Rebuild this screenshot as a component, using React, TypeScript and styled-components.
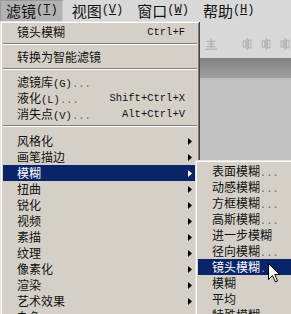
import React from 'react'
import styled, { createGlobalStyle } from 'styled-components'

type Item =
  | { kind: 'sep'; size?: number }
  | { kind: 'item'; label: string; key?: string; more?: string; shortcut?: string; sub?: boolean; active?: boolean }

const MAIN: Item[] = [
  { kind: 'item', label: '镜头模糊', shortcut: 'Ctrl+F' },
  { kind: 'sep' },
  { kind: 'item', label: '转换为智能滤镜' },
  { kind: 'sep' },
  { kind: 'item', label: '滤镜库', key: '(G)', more: '...' },
  { kind: 'item', label: '液化', key: '(L)', more: '...', shortcut: 'Shift+Ctrl+X' },
  { kind: 'item', label: '消失点', key: '(V)', more: '...', shortcut: 'Alt+Ctrl+V' },
  { kind: 'sep', size: 11 },
  { kind: 'item', label: '风格化', sub: true },
  { kind: 'item', label: '画笔描边', sub: true },
  { kind: 'item', label: '模糊', sub: true, active: true },
  { kind: 'item', label: '扭曲', sub: true },
  { kind: 'item', label: '锐化', sub: true },
  { kind: 'item', label: '视频', sub: true },
  { kind: 'item', label: '素描', sub: true },
  { kind: 'item', label: '纹理', sub: true },
  { kind: 'item', label: '像素化', sub: true },
  { kind: 'item', label: '渲染', sub: true },
  { kind: 'item', label: '艺术效果', sub: true },
  { kind: 'item', label: '杂色', sub: true },
]

const BLUR: Item[] = [
  { kind: 'item', label: '表面模糊', more: '...' },
  { kind: 'item', label: '动感模糊', more: '...' },
  { kind: 'item', label: '方框模糊', more: '...' },
  { kind: 'item', label: '高斯模糊', more: '...' },
  { kind: 'item', label: '进一步模糊' },
  { kind: 'item', label: '径向模糊', more: '...' },
  { kind: 'item', label: '镜头模糊', more: '...', active: true },
  { kind: 'item', label: '模糊' },
  { kind: 'item', label: '平均' },
  { kind: 'item', label: '特殊模糊', more: '...' },
]

const TOP = [
  { label: '滤镜', key: 'T', open: true },
  { label: '视图', key: 'V' },
  { label: '窗口', key: 'W' },
  { label: '帮助', key: 'H' },
]


function Arrow({ light }: { light?: boolean }) {
  return (
    <S.ArrowIcon width="4" height="7" viewBox="0 0 4 7">
      <path d="M0 0 L4 3.5 L0 7 Z" fill={light ? '#fff' : '#000'} />
    </S.ArrowIcon>
  )
}

function MenuList({ items }: { items: Item[] }) {
  return (
    <>
      {items.map((it, i) =>
        it.kind === 'sep' ? (
          <S.Separator key={i} $size={it.size ?? 9} />
        ) : (
          <S.Row key={i} $active={!!it.active}>
            <S.Label>
              {it.label}
              {it.key && <S.Mono>{it.key}</S.Mono>}
              {it.more && <S.Dots>{it.more}</S.Dots>}
            </S.Label>
            {it.shortcut && <S.Shortcut>{it.shortcut}</S.Shortcut>}
            {it.sub && <Arrow light={it.active} />}
          </S.Row>
        )
      )}
    </>
  )
}

function ToolIcon({ variant }: { variant: number }) {
  if (variant === 0) {
    return (
      <svg width="14" height="14" viewBox="0 0 14 14">
        <path d="M7 1 V12 M2 4 H12 M3 7 H11 M2 10 H12 M0 13 H14" stroke="#a3a3a3" strokeWidth="1" fill="none" />
      </svg>
    )
  }
  return (
    <svg width="14" height="14" viewBox="0 0 14 14">
      <path d="M7 0 V14" stroke="#9c9c9c" strokeWidth="1" />
      <rect x="2.5" y="3.5" width="3" height="7" fill="none" stroke="#a8a8a8" />
      <rect x="8.5" y="2.5" width="3" height="9" fill="none" stroke="#a8a8a8" />
    </svg>
  )
}


export default function App() {
  return (
    <S.Screen>
      <GlobalStyle />
      <S.MenuBar>
        {TOP.map(t => (
          <S.TopItem key={t.label} $open={!!t.open}>
            {t.label}
            <S.TopKey>(<u>{t.key}</u>)</S.TopKey>
          </S.TopItem>
        ))}
      </S.MenuBar>

      <S.Toolbar>
        <ToolIcon variant={0} />
        <S.ToolGap />
        <ToolIcon variant={1} />
        <ToolIcon variant={1} />
        <ToolIcon variant={1} />
      </S.Toolbar>
      <S.Band />
      <S.Canvas />

      <S.Menu $top={21} $left={0} $width={200}>
        <MenuList items={MAIN} />
      </S.Menu>

      <S.Menu $top={160} $left={195} $width={100}>
        <MenuList items={BLUR} />
      </S.Menu>

      <S.Cursor width="13" height="20" viewBox="0 0 13 20">
        <path
          d="M0.5 0.5 L0.5 16.5 L4.5 12.5 L7.5 19 L9.5 18 L6.8 11.5 L11.5 11.5 Z"
          fill="#fff"
          stroke="#000"
          strokeWidth="1"
          strokeLinejoin="miter"
        />
      </S.Cursor>
    </S.Screen>
  )
}


const GlobalStyle = createGlobalStyle`
  html, body {
    margin: 0;
    padding: 0;
    background: #bfbfbf;
  }
  body {
    font-family: "Noto Sans CJK SC", sans-serif;
  }
`

const S = {
  Screen: styled.div`
    position: relative;
    width: 291px;
    height: 314px;
    overflow: hidden;
    display: flex;
    flex-direction: column;
    background: #bfbfbf;
  `,

  MenuBar: styled.div`
    height: 21px;
    display: flex;
    gap: 3px;
    background: #d8d8d8;
    flex-shrink: 0;
  `,

  TopItem: styled.div<{ $open: boolean }>`
    display: flex;
    align-items: center;
    padding: 0 5px 0 6px;
    font-family: "Noto Sans CJK SC", sans-serif;
    font-size: 15px;
    line-height: 21px;
    color: #111;
    background: ${({ $open }) => ($open ? '#b2b2b2' : 'transparent')};
    box-shadow: ${({ $open }) => ($open ? 'inset 1px 1px 0 #9a9a9a, inset -1px 0 0 #c8c8c8' : 'none')};
  `,

  TopKey: styled.span`
    font-family: "Liberation Mono", monospace;
    font-size: 12px;
    & u {
      text-underline-offset: 1px;
    }
  `,

  Toolbar: styled.div`
    height: 37px;
    flex-shrink: 0;
    box-sizing: border-box;
    padding: 16px 0 0 205px;
    display: flex;
    gap: 7px;
    background: #d9d9d9;
  `,

  ToolGap: styled.div`
    width: 11px;
  `,

  Band: styled.div`
    height: 20px;
    flex-shrink: 0;
    background: linear-gradient(#808080, #a0a0a0);
  `,

  Canvas: styled.div`
    flex: 1;
    background: #c0c0c0;
  `,

  Menu: styled.div<{ $top: number; $left: number; $width: number }>`
    position: absolute;
    top: ${({ $top }) => $top}px;
    left: ${({ $left }) => $left}px;
    width: ${({ $width }) => $width}px;
    box-sizing: border-box;
    padding: 3px;
    background: #d4d0c8;
    box-shadow:
      inset 1px 1px 0 #e6e3de,
      inset -1px -1px 0 #404040,
      inset 2px 2px 0 #ffffff,
      inset -2px -2px 0 #808080;
    display: flex;
    flex-direction: column;
  `,

  Row: styled.div<{ $active: boolean }>`
    height: 16px;
    flex-shrink: 0;
    display: flex;
    align-items: center;
    padding: 0 5px 0 14px;
    font-family: "Noto Sans CJK SC", sans-serif;
    font-size: 12px;
    line-height: 16px;
    color: ${({ $active }) => ($active ? '#ffffff' : '#111111')};
    background: ${({ $active }) => ($active ? '#0a246a' : 'transparent')};
    white-space: nowrap;
    overflow: hidden;
  `,

  Label: styled.span`
    flex: 1;
    display: flex;
    align-items: baseline;
    height: 16px;
  `,

  Mono: styled.span`
    font-family: "Liberation Mono", monospace;
    font-size: 10.5px;
    line-height: 1;
  `,

  Dots: styled.span`
    font-family: "Liberation Mono", monospace;
    font-size: 10.5px;
    line-height: 1;
    opacity: 0.55;
  `,

  Shortcut: styled.span`
    font-family: "Liberation Mono", monospace;
    font-size: 10.5px;
    line-height: 1;
    margin-right: 7px;
  `,

  ArrowIcon: styled.svg`
    display: block;
    flex-shrink: 0;
  `,

  Separator: styled.div<{ $size: number }>`
    height: ${({ $size }) => $size}px;
    flex-shrink: 0;
    box-sizing: border-box;
    padding-top: 3px;
    &::before {
      content: '';
      display: block;
      height: 0;
      border-top: 1px solid #808080;
      border-bottom: 1px solid #ffffff;
    }
  `,

  Cursor: styled.svg`
    position: absolute;
    left: 268px;
    top: 263px;
  `,
}
